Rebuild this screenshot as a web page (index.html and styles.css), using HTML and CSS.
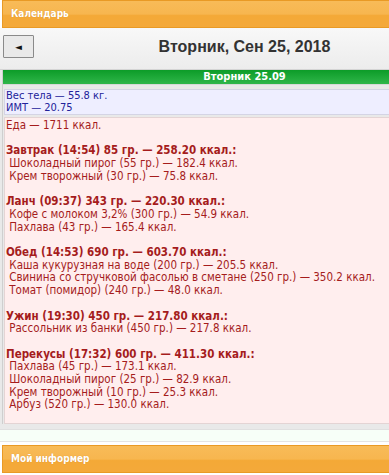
FILE: index.html
```html
<!DOCTYPE html>
<html lang="ru">
<head>
    <meta charset="UTF-8">
    <meta name="viewport" content="width=device-width, initial-scale=1.0">
    <title>Календарь</title>
    <link rel="stylesheet" href="styles.css">
</head>
<body>
    <div class="page">
        <div class="block-head">Календарь</div>

        <div class="calendar">
            <div class="cal-nav">
                <button class="cal-prev" type="button">&#9668;</button>
                <h2 class="cal-title">Вторник, Сен 25, 2018</h2>
            </div>

            <div class="day">
                <div class="day-head">Вторник 25.09</div>
                <div class="day-body">
                    <div class="stats">
                        Вес тела — 55.8 кг.<br>
                        ИМТ — 20.75
                    </div>
                    <div class="food">
                        Еда — 1711 ккал.<br>
                        <br>
                        <b>Завтрак (14:54) 85 гр. — 258.20 ккал.:</b><br>
                        &nbsp;Шоколадный пирог (55 гр.) — 182.4 ккал.<br>
                        &nbsp;Крем творожный (30 гр.) — 75.8 ккал.<br>
                        <br>
                        <b>Ланч (09:37) 343 гр. — 220.30 ккал.:</b><br>
                        &nbsp;Кофе с молоком 3,2% (300 гр.) — 54.9 ккал.<br>
                        &nbsp;Пахлава (43 гр.) — 165.4 ккал.<br>
                        <br>
                        <b>Обед (14:53) 690 гр. — 603.70 ккал.:</b><br>
                        &nbsp;Каша кукурузная на воде (200 гр.) — 205.5 ккал.<br>
                        &nbsp;Свинина со стручковой фасолью в сметане (250 гр.) — 350.2 ккал.<br>
                        &nbsp;Томат (помидор) (240 гр.) — 48.0 ккал.<br>
                        <br>
                        <b>Ужин (19:30) 450 гр. — 217.80 ккал.:</b><br>
                        &nbsp;Рассольник из банки (450 гр.) — 217.8 ккал.<br>
                        <br>
                        <b>Перекусы (17:32) 600 гр. — 411.30 ккал.:</b><br>
                        &nbsp;Пахлава (45 гр.) — 173.1 ккал.<br>
                        &nbsp;Шоколадный пирог (25 гр.) — 82.9 ккал.<br>
                        &nbsp;Крем творожный (10 гр.) — 25.3 ккал.<br>
                        &nbsp;Арбуз (520 гр.) — 130.0 ккал.
                    </div>
                </div>
            </div>
        </div>

        <div class="strip"></div>

        <div class="block-head">Мой информер</div>
    </div>
</body>
</html>
```

FILE: styles.css
```css
html, body { overflow: hidden; }
body { margin: 0; padding: 0; background-color: #fff; font-family: 'DejaVu Sans Condensed', 'DejaVu Sans', sans-serif; font-size: 11.5px; }

.page { width: 484px; margin-left: 2px; }

/* orange block headers */
.block-head {
    height: 26px; line-height: 26px; padding-left: 8px;
    border: 1px solid #e99a25;
    background: linear-gradient(#f8bb58 0%, #f7b64f 50%, #f4a937 56%, #f4a93a 100%);
    color: #fff; font-weight: bold; font-size: 10px;
    text-shadow: 0 0 1px rgba(160,90,0,0.4);
}

.calendar { background-color: #e9e9e9; margin-left: -2px; padding-bottom: 5px; }

.cal-nav {
    display: grid; grid-template-columns: 1fr auto 1fr; align-items: center;
    padding: 7px 0 11px 3px;
    background: linear-gradient(#f8f8f8, #ececec);
    border-bottom: 1px solid #d4d4d4;
}
.cal-prev {
    width: 31px; height: 23px; padding: 0; margin: 0;
    border: 1px solid #8a8a8a; border-radius: 1px; background-color: #e9e9e9;
    font-size: 9px; color: #111; font-family: 'DejaVu Sans', sans-serif;
    justify-self: start;
}
.cal-title { margin: 0; font-family: 'Liberation Sans', Arial, sans-serif; font-size: 16px; font-weight: bold; color: #333; }

.day { margin-left: 2px; border-left: 1px solid #cfcfcf; }
.day-head {
    height: 14px; line-height: 14px; text-align: center; font-size: 11px;
    background: linear-gradient(#0c9c28, #2fb64a);
    color: #fff; font-weight: bold;
}
.day-body { padding: 4px 0 0 1px; border-top: 1px solid #d8d8d8; }

.stats {
    border: 1px solid #d4d4e4; background-color: #eeeeff; color: #22229a;
    font-size: 11px; line-height: 12px; padding: 0 1px;
}
.food {
    margin-top: 2px; border: 1px solid #e4d4d4; background-color: #ffeeee; color: #a51c1c;
    line-height: 12.7px; padding: 1px 1px 12px;
}
.food b { font-weight: bold; }

.strip { height: 11px; background-color: #f7fff8; border-top: 1px solid #e0e0e0; border-bottom: 1px solid #e4e4e4; margin: 0 0 3px -2px; }
```
